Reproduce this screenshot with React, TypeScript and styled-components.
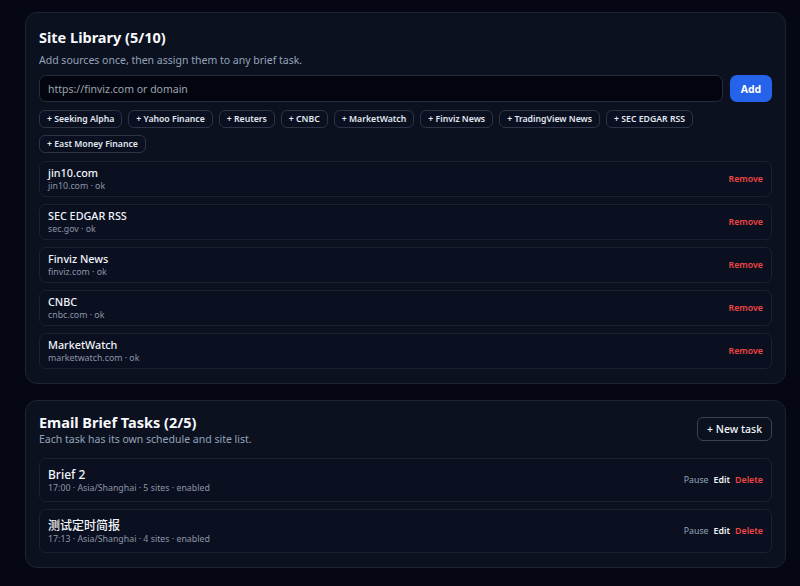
import React from "react";
import styled, { createGlobalStyle } from "styled-components";

const Global = createGlobalStyle`
  html, body { margin: 0; padding: 0; background: #050814; }
  body { font-family: "Noto Sans", "Noto Sans CJK SC", sans-serif; color: #e5e7eb; }
  * { box-sizing: border-box; }
`;

const Page = styled.div`
  padding: 12px 14px 16px 25px;
  display: flex;
  flex-direction: column;
  gap: 16px;
`;

const Card = styled.section<{ $pt: number }>`
  background: #0c1120;
  border: 1px solid #1c2333;
  border-radius: 12px;
  padding: ${(p) => p.$pt}px 13px 14px 13px;
`;

const Title = styled.h2`
  margin: 0;
  font-size: 14.5px;
  font-weight: 700;
  color: #f8fafc;
  line-height: 20px;
`;

const Sub = styled.p<{ $mt?: number }>`
  margin: ${(p) => p.$mt ?? 0}px 0 0;
  font-size: 10.5px;
  color: #94a3b8;
  line-height: 14px;
`;

const InputRow = styled.div`
  display: flex;
  gap: 7px;
  margin-top: 8px;
`;

const Input = styled.div`
  flex: 1;
  height: 27px;
  background: #03050e;
  border: 1px solid #252c3c;
  border-radius: 7px;
  display: flex;
  align-items: center;
  padding: 0 8px;
  font-size: 10.5px;
  color: #9ca3af;
`;

const AddButton = styled.button`
  width: 42px;
  height: 27px;
  border: none;
  border-radius: 7px;
  background: #2563eb;
  color: #fff;
  font-family: inherit;
  font-weight: 700;
  font-size: 10.5px;
`;

const Chips = styled.div`
  display: flex;
  flex-wrap: wrap;
  gap: 7px 6px;
  margin-top: 8px;
`;

const Chip = styled.span`
  height: 18px;
  display: inline-flex;
  align-items: center;
  padding: 0 7px;
  border: 1px solid #2c3446;
  border-radius: 6px;
  font-size: 8.7px;
  font-weight: 600;
  color: #e2e8f0;
  background: #0b1020;
  white-space: nowrap;
`;

const List = styled.div<{ $mt: number }>`
  display: flex;
  flex-direction: column;
  gap: 7px;
  margin-top: ${(p) => p.$mt}px;
`;

const Row = styled.div<{ $h: number }>`
  height: ${(p) => p.$h}px;
  border: 1px solid #1a2131;
  border-radius: 7px;
  background: #0b1020;
  display: flex;
  align-items: center;
  justify-content: space-between;
  padding: 0 8px;
`;

const RowText = styled.div`
  display: flex;
  flex-direction: column;
`;

const RowTitle = styled.div<{ $size: number }>`
  font-size: ${(p) => p.$size}px;
  font-weight: 500;
  color: #f1f5f9;
  line-height: ${(p) => p.$size + 3}px;
`;

const RowSub = styled.div`
  font-size: 8.8px;
  color: #8b95a7;
  line-height: 12px;
`;

const Remove = styled.span`
  font-size: 8.8px;
  font-weight: 600;
  color: #ef4444;
`;

const Header = styled.div`
  display: flex;
  justify-content: space-between;
  align-items: center;
`;

const GhostButton = styled.button`
  height: 24px;
  padding: 0 9px;
  border: 1px solid #3a4254;
  border-radius: 6px;
  background: #0c1120;
  color: #f1f5f9;
  font-family: inherit;
  font-size: 10.5px;
  font-weight: 500;
`;

const Actions = styled.div`
  display: flex;
  gap: 5px;
  font-size: 8.8px;
`;

const Action = styled.span<{ $tone: "muted" | "light" | "danger" }>`
  color: ${(p) => (p.$tone === "muted" ? "#94a3b8" : p.$tone === "light" ? "#f1f5f9" : "#ef4444")};
  font-weight: ${(p) => (p.$tone === "muted" ? 400 : 600)};
`;

const chips = [
  "Seeking Alpha",
  "Yahoo Finance",
  "Reuters",
  "CNBC",
  "MarketWatch",
  "Finviz News",
  "TradingView News",
  "SEC EDGAR RSS",
  "East Money Finance",
];

const sites = [
  ["jin10.com", "jin10.com · ok"],
  ["SEC EDGAR RSS", "sec.gov · ok"],
  ["Finviz News", "finviz.com · ok"],
  ["CNBC", "cnbc.com · ok"],
  ["MarketWatch", "marketwatch.com · ok"],
];

const tasks = [
  ["Brief 2", "17:00 · Asia/Shanghai · 5 sites · enabled"],
  ["测试定时简报", "17:13 · Asia/Shanghai · 4 sites · enabled"],
];

export default function App() {
  return (
    <>
      <Global />
      <Page>
        <Card $pt={14}>
          <Title>Site Library (5/10)</Title>
          <Sub $mt={6}>Add sources once, then assign them to any brief task.</Sub>
          <InputRow>
            <Input>https://finviz.com or domain</Input>
            <AddButton>Add</AddButton>
          </InputRow>
          <Chips>
            {chips.map((c) => (
              <Chip key={c}>+ {c}</Chip>
            ))}
          </Chips>
          <List $mt={8}>
            {sites.map(([t, s]) => (
              <Row key={t} $h={36}>
                <RowText>
                  <RowTitle $size={10.8}>{t}</RowTitle>
                  <RowSub>{s}</RowSub>
                </RowText>
                <Remove>Remove</Remove>
              </Row>
            ))}
          </List>
        </Card>
        <Card $pt={11}>
          <Header>
            <div>
              <Title>Email Brief Tasks (2/5)</Title>
              <Sub>Each task has its own schedule and site list.</Sub>
            </div>
            <GhostButton>+ New task</GhostButton>
          </Header>
          <List $mt={12}>
            {tasks.map(([t, s]) => (
              <Row key={t} $h={44}>
                <RowText>
                  <RowTitle $size={12}>{t}</RowTitle>
                  <RowSub>{s}</RowSub>
                </RowText>
                <Actions>
                  <Action $tone="muted">Pause</Action>
                  <Action $tone="light">Edit</Action>
                  <Action $tone="danger">Delete</Action>
                </Actions>
              </Row>
            ))}
          </List>
        </Card>
      </Page>
    </>
  );
}
